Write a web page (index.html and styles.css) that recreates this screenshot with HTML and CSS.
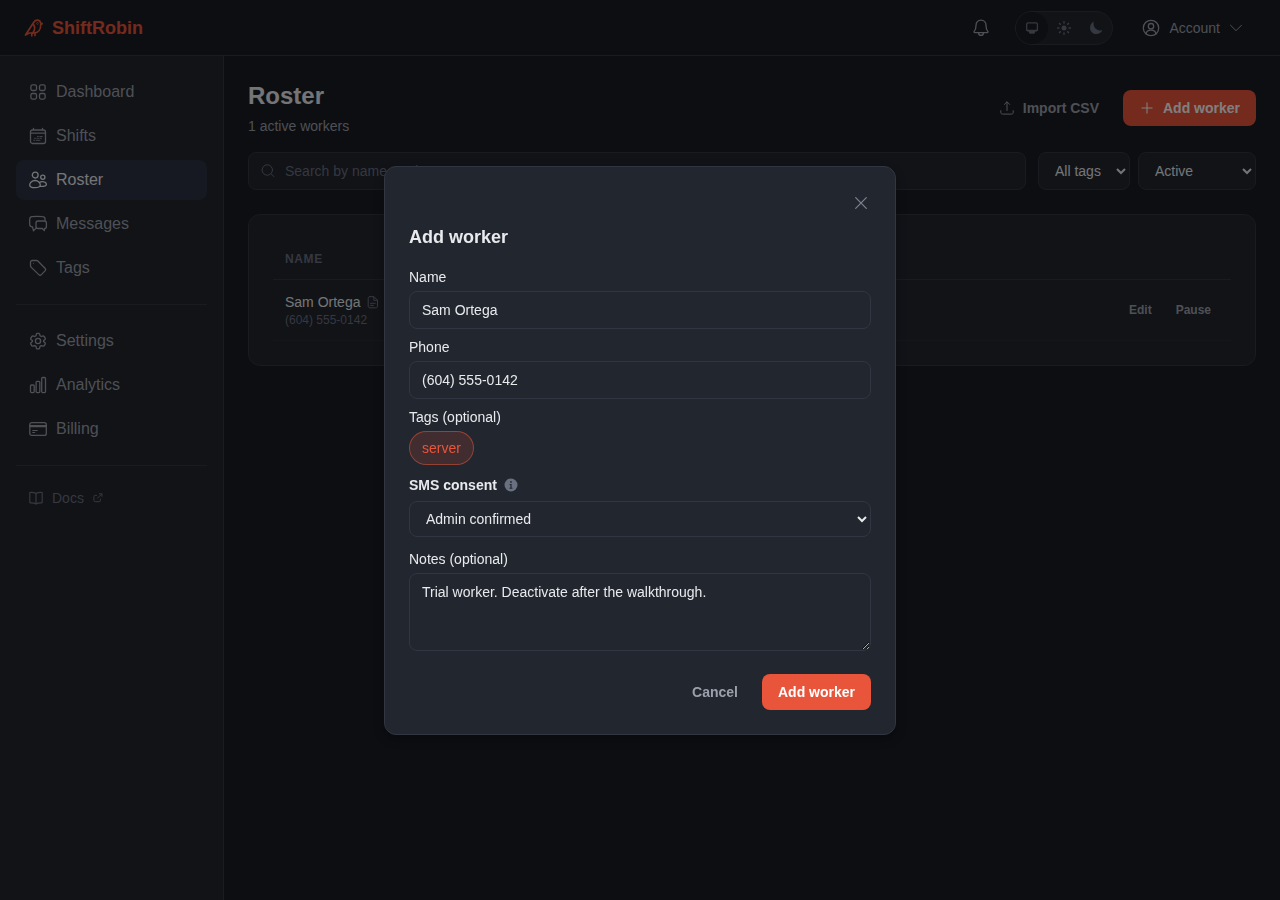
FILE: index.html
```html
<!DOCTYPE html>
<html lang="en">
<head>
<meta charset="utf-8">
<title>Roster – ShiftRobin</title>
<link rel="stylesheet" href="styles.css">
</head>
<body>
<header class="topbar">
  <div class="brand">
    <svg class="icon" width="20" height="20" viewBox="0 0 20 20" stroke-width="1.700"><path d="M1.500 17 9.300 5C10.600 2.700 12.200 1.900 14 2.100c1.700.3 2.400 1.500 2.600 2.700l1.600.9-1.500.9c.2 4.800-2.500 8-6.300 8.400H5.300L1.500 17"/><path d="M9.200 6c2 2.700 1.900 6-.4 9M7.800 15.300v2.500M11 15.200v2.300"/><circle cx="13.500" cy="5.500" r=".3"/></svg>
    <span>ShiftRobin</span>
  </div>
  <div class="top-actions">
    <svg class="icon bell" width="20" height="20" viewBox="0 0 20 20"><path d="M10 2.200c-3.100 0-5 2.200-5 5.200 0 3.300-.7 4.700-1.800 6-.4.600-.1 1.200.6 1.200h12.400c.7 0 1-.6.6-1.200-1.100-1.300-1.800-2.700-1.800-6 0-3-1.900-5.200-5-5.200ZM7.500 14.800c.2 1.700 1.100 2.600 2.500 2.600s2.300-.9 2.500-2.600"/></svg>
    <div class="theme">
      <span class="theme-option selected"><svg class="icon" width="16" height="16" viewBox="0 0 16 16" stroke-width="1.300"><rect x="2.700" y="2.800" width="10.700" height="7.900" rx="1.200"/><path fill="currentColor" stroke="none" d="M2.500 9.700h11v.6c0 .7-.5 1.200-1.200 1.200H11v1c0 .7-.5 1.200-1.200 1.200H6.200c-.7 0-1.200-.5-1.200-1.200v-1H3.700c-.7 0-1.200-.5-1.200-1.200Z"/></svg></span>
      <span class="theme-option"><svg class="icon" width="16" height="16" viewBox="0 0 16 16" stroke-width="1.500"><circle cx="8" cy="8" r="2.500" fill="currentColor" stroke="none"/><path d="M8 1.700v1.200M8 13.100v1.200M1.700 8h1.200M13.100 8h1.200M3.500 3.500l.8.8M11.700 11.700l.8.8M3.500 12.500l.8-.8M11.700 4.300l.8-.8"/></svg></span>
      <span class="theme-option"><svg width="16" height="16" viewBox="0 0 16 16" fill="currentColor"><path d="M5.700 1.600C4.500 6.800 8.600 11.300 14.400 10.300 12.800 13.300 10 14.500 7.200 14 1.500 13.100-.1 5 5.700 1.600Z"/></svg></span>
    </div>
    <div class="account">
      <svg class="icon" width="20" height="20" viewBox="0 0 20 20"><circle cx="10" cy="10" r="7.700"/><circle cx="10" cy="8.200" r="2.700"/><path d="M5 15.800c.5-2.400 2.100-3.700 5-3.700s4.500 1.300 5 3.700"/></svg>
      <span>Account</span>
      <svg class="icon" width="16" height="16" viewBox="0 0 16 16" stroke-width="1"><path d="m2.500 5.200 5.500 5.500 5.500-5.500"/></svg>
    </div>
  </div>
</header>
<div class="shell">
  <nav class="sidebar">
    <a class="nav-item"><svg class="icon" width="20" height="20" viewBox="0 0 20 20"><rect x="2.900" y="2.900" width="5.600" height="5.600" rx="1.500"/><rect x="11.500" y="2.900" width="5.600" height="5.600" rx="1.500"/><rect x="2.900" y="11.500" width="5.600" height="5.600" rx="1.500"/><rect x="11.500" y="11.500" width="5.600" height="5.600" rx="1.500"/></svg>Dashboard</a>
    <a class="nav-item"><svg class="icon" width="20" height="20" viewBox="0 0 20 20"><rect x="2.500" y="4" width="15" height="13.500" rx="2"/><path d="M5.500 2.500v1.300M14.500 2.500v1.300M2.500 7.200h15"/><path stroke-width=".8" d="M9.500 10.500h.8M11.800 10.500h2.500M6.500 12.300h1M9 12.300h1.500M12 12.300h1.500M5.700 14.300h1M8.200 14.300h3.800"/></svg>Shifts</a>
    <a class="nav-item active"><svg class="icon" width="20" height="20" viewBox="0 0 20 20"><circle cx="7.200" cy="5.100" r="2.900"/><circle cx="14.800" cy="7.300" r="2.100"/><path d="M7 10.500c-3.200 0-5.300 2.500-5.300 4.500 0 1.800 2.100 2.700 5.300 2.700s5.300-.9 5.300-2.700c0-2-2.100-4.500-5.300-4.500ZM11.200 12.700c1-.8 2.200-1.200 3.500-1.100 2.100.2 3.700 1.500 3.700 2.900 0 1.200-1.500 1.900-5.700 1.900"/></svg>Roster</a>
    <a class="nav-item"><svg class="icon" width="20" height="20" viewBox="0 0 20 20"><path d="M17 6.500V4.800c0-1.500-.8-2.100-2.500-2.200-3.500-.3-7-.3-10.500 0-1.700.2-2.300 1-2.300 2.700v5.200c0 1.500.8 2.300 2.800 2.400l1 4 2.800-3"/><path d="M10 7h6.300c1.400 0 2.100.7 2.100 2v3.500c0 1.200-.6 2-1.700 2l-.4 2-2-2H10c-1.300 0-2-.7-2-2V9c0-1.300.7-2 2-2Z"/></svg>Messages</a>
    <a class="nav-item"><svg class="icon" width="20" height="20" viewBox="0 0 20 20"><path d="M2.500 4.200c0-1.100.7-1.700 1.700-1.700h4.300c.7 0 1.200.2 1.600.7l6.900 7c.9.900.9 1.800 0 2.700l-3.600 3.700c-.8.900-1.800.9-2.600 0l-7.500-7.200c-.5-.5-.8-1-.8-1.700Z"/><path stroke-width=".9" d="M5.300 5.300h.1"/></svg>Tags</a>
    <hr class="rule">
    <a class="nav-item"><svg class="icon" width="20" height="20" viewBox="0 0 20 20"><path d="m8.400 2.900-.4 1.800-1.300.8-1.800-.6-1 .4-1.200 2 .2 1.100 1.500 1.200v.8l-1.500 1.300-.2 1.100 1.200 2 1 .4 1.800-.6 1.300.8.400 1.800.8.700h1.600l.8-.7.4-1.800 1.300-.8 1.800.6 1-.4 1.200-2-.2-1.100-1.500-1.300v-.8l1.500-1.200.2-1.100-1.200-2-1-.4-1.800.6-1.300-.8-.4-1.800-.8-.6H9.200Z"/><circle cx="10" cy="10" r="2.600"/></svg>Settings</a>
    <a class="nav-item"><svg class="icon" width="20" height="20" viewBox="0 0 20 20"><rect x="2.500" y="10" width="3.700" height="7.600" rx="1"/><rect x="8.100" y="6.300" width="3.700" height="11.300" rx="1"/><rect x="13.700" y="2.500" width="3.800" height="15.100" rx="1"/></svg>Analytics</a>
    <a class="nav-item"><svg class="icon" width="20" height="20" viewBox="0 0 20 20"><rect x="1.800" y="3.700" width="16.500" height="12.700" rx="2"/><path d="M1.800 6.700h16.500M1.800 7.500h16.500"/><path stroke-width="1.100" d="M4.700 11.500h4.600M4.700 13.500h2"/></svg>Billing</a>
    <hr class="rule">
    <a class="docs"><svg class="icon" width="16" height="16" viewBox="0 0 16 16" stroke-width="1.200"><path d="M8 3.500C6.500 2.300 4.700 2.200 2.400 2.300c-.4 0-.6.2-.6.600v9.400c0 .4.200.6.600.6 2.300-.1 4.100.1 5.600 1.200 1.500-1.100 3.300-1.300 5.600-1.200.4 0 .6-.2.6-.6V2.900c0-.4-.2-.6-.6-.6-2.300-.1-4.100 0-5.600 1.200Zm0 0v10.500"/></svg><span>Docs</span><svg class="icon" width="12" height="12" viewBox="0 0 12 12"><path d="M4.700 3.400H3.200c-.9 0-1.300.4-1.300 1.300v3.700c0 .9.400 1.300 1.300 1.300h3.900c.9 0 1.300-.4 1.300-1.300V7M5.500 6.200l4.200-4.200M7.300 1.800h2.600v2.600"/></svg></a>
  </nav>
  <main class="main">
    <div class="page-head">
      <div>
        <h1 class="page-title">Roster</h1>
        <p class="page-sub">1 active workers</p>
      </div>
      <div class="page-actions">
        <span class="btn ghost"><svg class="icon" width="16" height="16" viewBox="0 0 16 16" stroke-width="1"><path d="M8 10.500V2M5.400 4.400 8 1.800l2.600 2.600M1.800 10.700v1.600c0 1.200.6 1.800 1.800 1.800h8.800c1.200 0 1.800-.6 1.800-1.800v-1.600"/></svg>Import CSV</span>
        <span class="btn primary"><svg class="icon" width="16" height="16" viewBox="0 0 16 16" stroke-width="1.100"><path d="M8 2.900v10.200M2.900 8h10.200"/></svg>Add worker</span>
      </div>
    </div>
    <div class="filters">
      <div class="search"><svg class="icon" width="16" height="16" viewBox="0 0 16 16" stroke-width="1"><circle cx="7.300" cy="7" r="5.200"/><path d="m11.200 10.900 2.700 2.700"/></svg><span>Search by name or phone</span></div>
      <select class="select tags-filter"><option>All tags</option></select>
      <select class="select status-filter"><option>Active</option></select>
    </div>
    <section class="card">
      <div class="table-head">NAME</div>
      <div class="table-row">
        <div>
          <div class="worker">Sam Ortega <svg class="icon" width="14" height="14" viewBox="0 0 14 14"><path d="M4 1.700h4l3.500 3.500V11c0 1.200-.6 1.800-1.800 1.800H4c-1.200 0-1.800-.6-1.800-1.800V3.500c0-1.200.6-1.800 1.800-1.800ZM7.800 2v3.300h3.400M4.600 8.300h4.600M4.600 10.400h2.600"/></svg></div>
          <div class="worker-phone">(604) 555-0142</div>
        </div>
        <div class="row-actions"><span>Edit</span><span>Pause</span></div>
      </div>
    </section>
  </main>
</div>
<div class="overlay">
  <div class="modal">
    <div class="modal-close"><svg class="icon" width="20" height="20" viewBox="0 0 20 20" stroke-width="1.200"><path d="m4.700 4.700 10.600 10.600M15.300 4.700 4.700 15.300"/></svg></div>
    <h2 class="modal-title">Add worker</h2>
    <label class="label">Name</label>
    <input class="input" value="Sam Ortega">
    <label class="label">Phone</label>
    <input class="input" value="(604) 555-0142">
    <label class="label">Tags (optional)</label>
    <div class="chips"><span class="chip">server</span></div>
    <div class="label consent">SMS consent <svg width="14" height="14" viewBox="0 0 14 14"><circle class="info-disc" cx="7" cy="7" r="6.500"/><circle class="info-mark" cx="7" cy="3.900" r=".9"/><path class="info-mark" d="M5.600 6h2v3.800h.9v1h-3v-1h.9V7h-.8Z"/></svg></div>
    <select class="select consent-select"><option>Admin confirmed</option></select>
    <label class="label notes-label">Notes (optional)</label>
    <textarea class="input notes">Trial worker. Deactivate after the walkthrough.</textarea>
    <div class="modal-actions"><span class="btn ghost">Cancel</span><span class="btn primary">Add worker</span></div>
  </div>
</div>
</body>
</html>
```

FILE: styles.css
```css
:root {
  color-scheme: dark;
  --bg: #1a1c24;
  --surface: #22262f;
  --border: #323642;
  --text: #e8eaed;
  --muted: #9ca0ab;
  --faint: #6b7080;
  --accent: #e8553a;
}
* { box-sizing: border-box; }
body {
  margin: 0;
  height: 900px;
  display: flex;
  flex-direction: column;
  overflow: hidden;
  background: var(--bg);
  color: var(--text);
  font: 14px/20px "Liberation Sans", Arial, sans-serif;
}
.icon {
  fill: none;
  stroke: currentColor;
  stroke-linecap: round;
  stroke-linejoin: round;
  flex: none;
}
.topbar {
  height: 56px;
  flex: none;
  display: flex;
  align-items: center;
  justify-content: space-between;
  padding: 0 36px 0 24px;
  border-bottom: 1px solid var(--border);
}
.brand {
  display: flex;
  align-items: center;
  gap: 8px;
  color: var(--accent);
  font-size: 18px;
  font-weight: 700;
}
.top-actions { display: flex; align-items: center; color: var(--muted); }
.top-actions svg[width="20"], .nav-item .icon { stroke-width: 1.3; }
.bell { margin-right: 24px; }
.theme {
  display: flex;
  border: 1px solid var(--border);
  border-radius: 17px;
  background: var(--surface);
  color: var(--faint);
  margin-right: 28px;
}
.theme-option {
  width: 32px;
  height: 32px;
  display: flex;
  align-items: center;
  justify-content: center;
  border-radius: 50%;
}
.theme-option.selected { background: var(--bg); }
.account { display: flex; align-items: center; gap: 8px; }
.shell { flex: 1; display: flex; min-height: 0; }
.sidebar {
  width: 224px;
  flex: none;
  padding: 16px;
  border-right: 1px solid var(--border);
  background: var(--surface);
  display: flex;
  flex-direction: column;
  gap: 4px;
}
.nav-item {
  height: 40px;
  display: flex;
  align-items: center;
  gap: 8px;
  padding: 0 12px;
  border-radius: 8px;
  color: var(--muted);
  font-size: 16px;
}
.nav-item.active { background: #2c3343; color: var(--text); }
.rule { width: 100%; height: 1px; border: 0; margin: 12px 0; background: var(--border); }
.docs { height: 32px; display: flex; align-items: center; gap: 8px; padding-left: 12px; color: var(--faint); }
.main { flex: 1; padding: 24px; }
.page-head { display: flex; justify-content: space-between; align-items: center; height: 56px; }
.page-title { margin: 0; font-size: 24px; line-height: 32px; }
.page-sub { margin: 4px 0 0; color: var(--muted); }
.page-actions { display: flex; gap: 8px; }
.btn {
  height: 36px;
  display: flex;
  align-items: center;
  gap: 8px;
  padding: 0 16px;
  border-radius: 8px;
  font-weight: 700;
}
.btn.ghost { color: var(--muted); }
.btn.primary { background: var(--accent); color: #fff; }
.filters { display: flex; gap: 8px; margin-top: 16px; }
.search {
  flex: 1;
  height: 38px;
  margin-right: 4px;
  display: flex;
  align-items: center;
  gap: 9px;
  padding: 0 11px;
  border: 1px solid var(--border);
  border-radius: 8px;
  background: var(--surface);
  color: var(--faint);
}
.select {
  height: 38px;
  padding: 0 12px;
  border: 1px solid var(--border);
  border-radius: 8px;
  background-color: var(--surface);
  color: var(--text);
  font: inherit;
}
.tags-filter { width: 92px; }
.status-filter { width: 118px; }
.card {
  height: 152px;
  margin-top: 24px;
  padding: 24px;
  border: 1px solid var(--border);
  border-radius: 12px;
  background: var(--surface);
}
.table-head {
  height: 41px;
  padding: 0 12px;
  border-bottom: 1px solid var(--border);
  color: var(--faint);
  font-size: 12px;
  line-height: 40px;
  font-weight: 700;
  letter-spacing: .6px;
}
.table-row {
  height: 61px;
  display: flex;
  align-items: center;
  justify-content: space-between;
  padding: 0 20px 0 12px;
  border-bottom: 1px solid #292d37;
}
.worker { display: flex; align-items: center; gap: 6px; }
.worker .icon { color: var(--faint); }
.worker-phone { color: var(--faint); font-size: 12px; line-height: 16px; }
.row-actions { display: flex; gap: 24px; color: var(--muted); font-size: 12px; font-weight: 700; }
.overlay {
  position: fixed;
  inset: 0;
  display: flex;
  align-items: flex-start;
  justify-content: center;
  padding-top: 166px;
  background: rgba(0, 0, 0, .5);
}
.modal {
  width: 512px;
  height: 569px;
  padding: 24px;
  display: flex;
  flex-direction: column;
  border: 1px solid var(--border);
  border-radius: 12px;
  background: var(--surface);
  box-shadow: 0 4px 12px rgba(0, 0, 0, .3);
}
.modal-close { height: 24px; display: flex; align-items: center; justify-content: flex-end; color: #7f8491; }
.modal-title { margin: 8px 0; font-size: 18px; line-height: 28px; }
.label { margin-top: 8px; margin-bottom: 4px; line-height: 20px; }
.input {
  width: 100%;
  height: 38px;
  flex: none;
  padding: 8px 12px;
  border: 1px solid var(--border);
  border-radius: 8px;
  background: var(--surface);
  color: var(--text);
  font: inherit;
}
.chips { display: flex; }
.chip {
  height: 34px;
  padding: 6px 12px;
  border: 1px solid rgba(232, 85, 58, .5);
  border-radius: 17px;
  background: rgba(232, 85, 58, .16);
  color: var(--accent);
}
.consent { margin: 10px 0 6px; display: flex; align-items: center; gap: 7px; font-weight: 700; }
.info-disc { fill: var(--faint); }
.info-mark { fill: var(--surface); }
.consent-select { width: 100%; height: 36px; flex: none; }
.notes-label { margin-top: 12px; }
.notes { height: 78px; resize: vertical; }
.modal-actions { display: flex; justify-content: flex-end; gap: 8px; margin-top: 23px; }
```
